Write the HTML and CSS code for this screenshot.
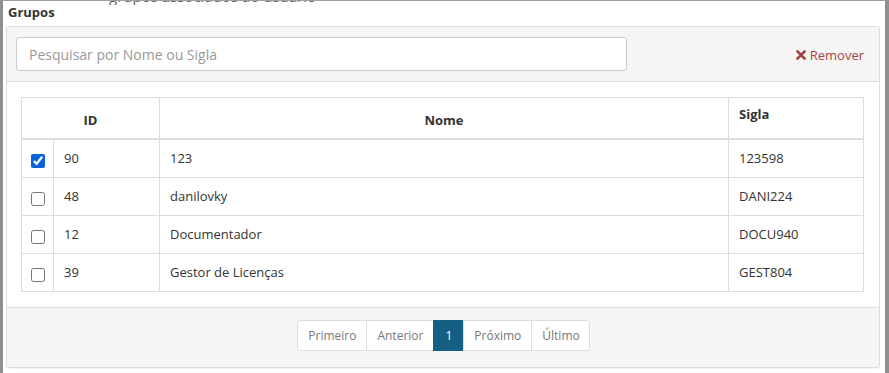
FILE: index.html
```html
<!DOCTYPE html>
<html>

<head>
  <meta name="viewport" content="width=device-width, initial-scale=1.0">
  <link rel="stylesheet" href="styles.css">
</head>

<body>
  <div class="frame">
    <!-- text of the page behind, cut off at the top -->
    <div class="ghost"><span>grupos associados ao usuário</span></div>

    <h4 class="title">Grupos</h4>

    <div class="panel">
      <div class="panel-heading">
        <input class="search" type="text" placeholder="Pesquisar por Nome ou Sigla">
        <a class="remove" href="#">
          <svg width="10" height="10" viewBox="0 0 10 10"><path d="M1.5 1.5 L8.5 8.5 M8.5 1.5 L1.5 8.5" stroke="#a94442" stroke-width="2.6" stroke-linecap="square"/></svg>
          Remover
        </a>
      </div>

      <div class="panel-body">
        <table class="grid">
          <thead>
            <tr>
              <th colspan="2" class="center">ID</th>
              <th class="center">Nome</th>
              <th class="sigla">Sigla</th>
            </tr>
          </thead>
          <tbody>
            <tr>
              <td class="check"><input type="checkbox" checked></td>
              <td class="id">90</td>
              <td>123</td>
              <td>123598</td>
            </tr>
            <tr>
              <td class="check"><input type="checkbox"></td>
              <td class="id">48</td>
              <td>danilovky</td>
              <td>DANI224</td>
            </tr>
            <tr>
              <td class="check"><input type="checkbox"></td>
              <td class="id">12</td>
              <td>Documentador</td>
              <td>DOCU940</td>
            </tr>
            <tr>
              <td class="check"><input type="checkbox"></td>
              <td class="id">39</td>
              <td>Gestor de Licenças</td>
              <td>GEST804</td>
            </tr>
          </tbody>
        </table>
      </div>

      <div class="panel-footer">
        <ul class="pagination">
          <li><a href="#">Primeiro</a></li>
          <li><a href="#">Anterior</a></li>
          <li class="active"><a href="#">1</a></li>
          <li><a href="#">Próximo</a></li>
          <li><a href="#">Último</a></li>
        </ul>
      </div>
    </div>
  </div>
</body>
</html>
```

FILE: styles.css
```css
/* modal fragment: group list */
body {
  font-family: "Open Sans", "Liberation Sans", sans-serif;
  font-size: 13px;
  color: #333;
  margin: 0;
  background-color: #fff;
}

.frame {
  height: 373px;
  box-sizing: border-box;
  border-left: 3px solid #8f8f8f;
  border-right: 4px solid #8f8f8f;
  border-top: 1px solid #a0a0a0;
  padding: 0 5px 0 3px;
}

.ghost {
  height: 4px;
  overflow: hidden;
  padding-left: 103px;
}

.ghost span {
  display: block;
  margin-top: -15px;
  font-size: 15px;
  line-height: 20px;
  color: #666;
}

.title {
  margin: -1px 0 6px 2px;
  font-size: 13px;
  font-weight: bold;
  line-height: 16px;
  color: #333;
}

.panel {
  border: 1px solid #ddd;
  border-radius: 3px;
  box-shadow: 0 1px 1px rgba(0, 0, 0, 0.05);
  background-color: #fff;
}

.panel-heading {
  display: flex;
  align-items: center;
  justify-content: space-between;
  padding: 10px 15px 10px 9px;
  background-color: #f5f5f5;
  border-bottom: 1px solid #ddd;
  border-radius: 3px 3px 0 0;
}

.search {
  width: 611px;
  height: 34px;
  box-sizing: border-box;
  padding: 6px 12px;
  border: 1px solid #ccc;
  border-radius: 3px;
  font-family: inherit;
  font-size: 14px;
  color: #555;
  background-color: #fff;
}

.search::placeholder {
  color: #999;
}

.remove {
  display: flex;
  align-items: center;
  gap: 4px;
  color: #a94442;
  text-decoration: none;
  font-size: 13px;
  margin-top: 2px;
}

.panel-body {
  padding: 15px 15px 15px 14px;
}

.grid {
  width: 100%;
  border-collapse: collapse;
  border: 1px solid #ddd;
}

.grid th,
.grid td {
  border: 1px solid #ddd;
  padding: 8px 10px;
  line-height: 21px;
  text-align: left;
}

.grid th {
  font-weight: bold;
  height: 25px;
  border-bottom-width: 2px;
  vertical-align: bottom;
  padding-bottom: 7px;
}

.grid th.center {
  text-align: center;
}

.grid th.sigla {
  vertical-align: top;
  padding-top: 6px;
}

.grid td.check {
  width: 14px;
  text-align: center;
  padding: 8px 8px 6px 9px;
}

.grid td.id {
  width: 85px;
}

.grid td:last-child {
  width: 114px;
}

.check input {
  margin: 0;
  width: 14px;
  height: 14px;
  vertical-align: middle;
  accent-color: #0b63d9;
}

.panel-footer {
  padding: 12px 15px 16px;
  background-color: #f5f5f5;
  border-top: 1px solid #ddd;
  border-radius: 0 0 3px 3px;
  display: flex;
  justify-content: center;
}

.pagination {
  display: flex;
  list-style: none;
  margin: 0;
  padding: 0 0 0 1px;
}

.pagination li a {
  display: block;
  padding: 4px 10px;
  line-height: 21px;
  font-size: 12px;
  color: #777;
  text-decoration: none;
  background-color: #fff;
  border: 1px solid #ddd;
  margin-left: -1px;
}

.pagination li:first-child a {
  border-radius: 3px 0 0 3px;
  margin-left: 0;
}

.pagination li:last-child a {
  border-radius: 0 3px 3px 0;
  padding-right: 9px;
}

.pagination li.active a {
  background-color: #155f85;
  border-color: #155f85;
  color: #fff;
  padding: 4px 11px;
}
```
